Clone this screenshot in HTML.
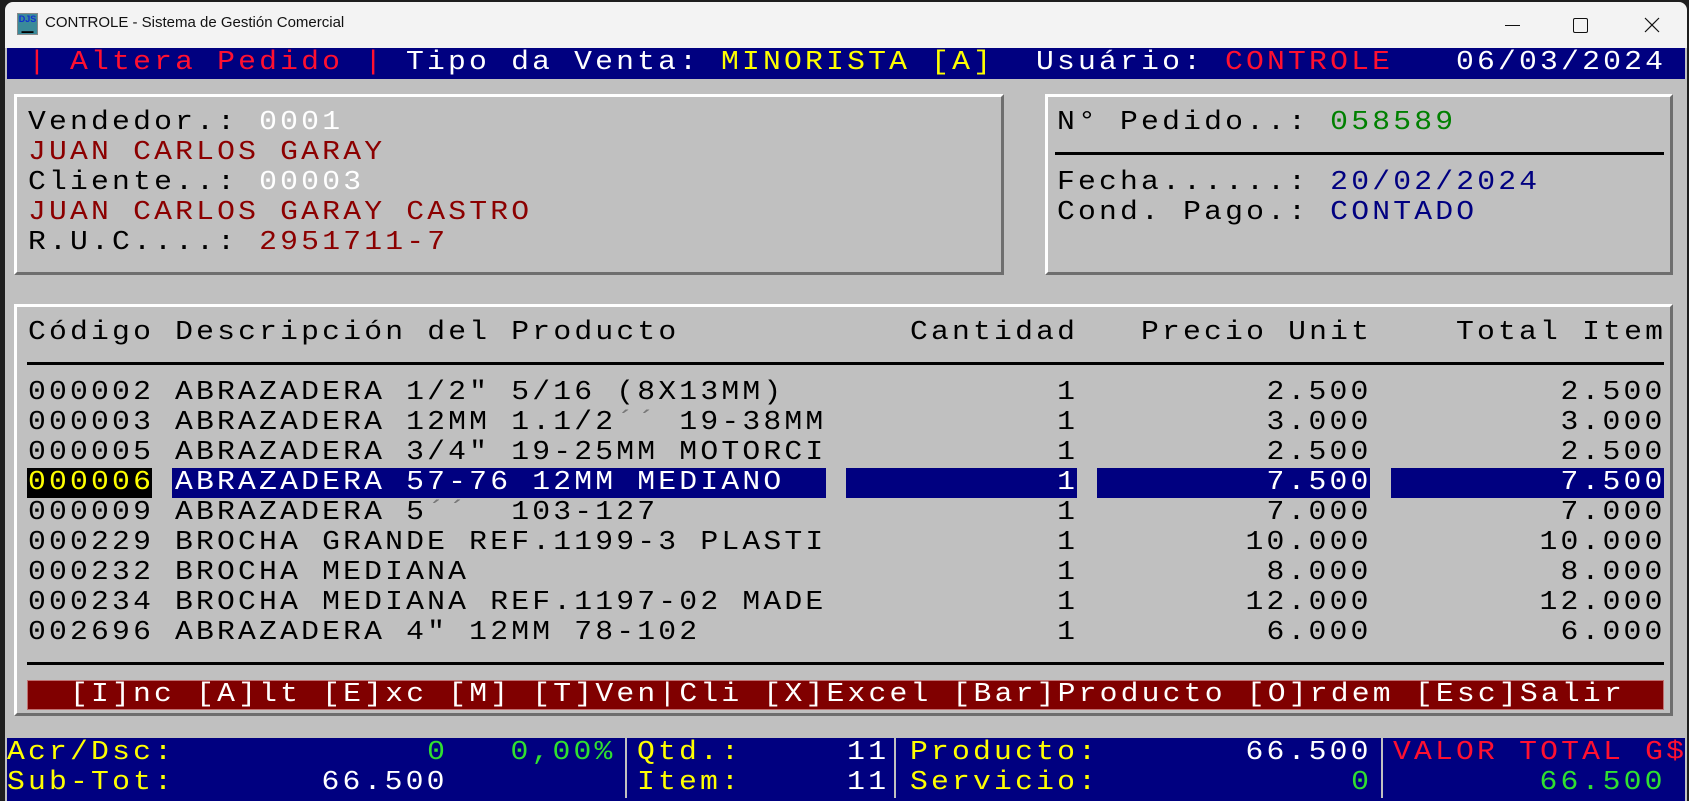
<!DOCTYPE html>
<html><head><meta charset="utf-8"><style>
body{margin:0;width:1689px;height:801px;background:#1e1e1e;overflow:hidden;position:relative;font-family:"Liberation Sans",sans-serif}
#tb{position:absolute;left:5px;top:2px;width:1682px;height:46px;background:#f3f3f3;border-radius:8px 8px 0 0}
#con{position:absolute;left:5px;top:48px;width:1682px;height:753px;background:#c0c0c0}
.l{position:absolute;height:30px;line-height:30px;font-family:"Liberation Mono",monospace;font-size:27px;letter-spacing:2.9px;white-space:pre;color:#000;transform:scaleX(1.1);transform-origin:left center}
.l[style*="right"]{transform-origin:right center}
.bar{position:absolute;height:30px}
.box{position:absolute;box-sizing:border-box;border:3px solid;border-color:#fff #6e6e6e #6e6e6e #fff}
.hl{position:absolute;height:3px;background:#000}
.w{color:#fff}.r{color:#ff1030}.y{color:#ffff00}.dr{color:#8b0000}.g{color:#008000}.nv{color:#000080}.lg{color:#30e030}.t{color:#777}
.vs{position:absolute;top:738px;width:2px;height:60px;background:#c0c0c0}
</style></head><body>
<div id="tb"></div>
<div style="position:absolute;left:17px;top:13px;width:21px;height:22px;background:#3a8a9a;border:1px solid #888;box-sizing:border-box;font:bold 9px 'Liberation Sans';color:#1030d0;text-align:center;line-height:11px">DJS<br><span style="font-size:6px;color:#000">▬▬</span></div>
<div style="position:absolute;left:45px;top:14px;font-size:15px;color:#111">CONTROLE - Sistema de Gestión Comercial</div>
<div style="position:absolute;left:1505px;top:25px;width:15px;height:1px;background:#111"></div>
<div style="position:absolute;left:1573px;top:18px;width:13px;height:13px;border:1px solid #111;border-radius:2px"></div>
<svg style="position:absolute;left:1644px;top:17px" width="16" height="16"><path d="M1 1L15 15M15 1L1 15" stroke="#111" stroke-width="1.2"/></svg>
<div id="con"></div>
<div class="bar" style="left:7px;top:48px;width:1678px;height:31px;background:#000080"></div>
<div class="l r" style="top:48px;left:28px">| Altera Pedido |</div>
<div class="l w" style="top:48px;left:406px">Tipo da Venta:</div>
<div class="l y" style="top:48px;left:721px">MINORISTA [A]</div>
<div class="l w" style="top:48px;left:1036px">Usuário:</div>
<div class="l r" style="top:48px;left:1225px">CONTROLE</div>
<div class="l w" style="top:48px;left:1456px">06/03/2024</div>

<div class="box" style="left:14px;top:94px;width:990px;height:181px"></div>
<div class="box" style="left:1045px;top:94px;width:628px;height:181px"></div>
<div class="box" style="left:14px;top:304px;width:1659px;height:412px"></div>

<div class="l" style="top:108px;left:28px">Vendedor.: <span class="w">0001</span></div>
<div class="l dr" style="top:138px;left:28px">JUAN CARLOS GARAY</div>
<div class="l" style="top:168px;left:28px">Cliente..: <span class="w">00003</span></div>
<div class="l dr" style="top:198px;left:28px">JUAN CARLOS GARAY CASTRO</div>
<div class="l" style="top:228px;left:28px">R.U.C....: <span class="dr">2951711-7</span></div>

<div class="l" style="top:108px;left:1057px">N° Pedido..: <span class="g">058589</span></div>
<div class="hl" style="left:1055px;top:152px;width:609px"></div>
<div class="l" style="top:168px;left:1057px">Fecha......: <span class="nv">20/02/2024</span></div>
<div class="l" style="top:198px;left:1057px">Cond. Pago.: <span class="nv">CONTADO</span></div>

<div class="l" style="top:318px;left:28px">Código Descripción del Producto</div>
<div class="l" style="top:318px;left:910px">Cantidad</div>
<div class="l" style="top:318px;left:1141px">Precio Unit</div>
<div class="l" style="top:318px;left:1456px">Total Item</div>
<div class="hl" style="left:27px;top:362px;width:1637px"></div>

<div class="bar" style="left:27px;top:468px;width:125px;background:#000"></div>
<div class="bar" style="left:172px;top:468px;width:654px;background:#000080"></div>
<div class="bar" style="left:846px;top:468px;width:231px;background:#000080"></div>
<div class="bar" style="left:1097px;top:468px;width:273px;background:#000080"></div>
<div class="bar" style="left:1391px;top:468px;width:273px;background:#000080"></div>

<div class="l" style="top:378px;left:28px">000002</div><div class="l" style="top:378px;left:175px">ABRAZADERA 1/2" 5/16 (8X13MM)</div>
<div class="l" style="top:408px;left:28px">000003</div><div class="l" style="top:408px;left:175px">ABRAZADERA 12MM 1.1/2<span class="t">´´</span> 19-38MM</div>
<div class="l" style="top:438px;left:28px">000005</div><div class="l" style="top:438px;left:175px">ABRAZADERA 3/4" 19-25MM MOTORCI</div>
<div class="l y" style="top:468px;left:28px">000006</div><div class="l w" style="top:468px;left:175px">ABRAZADERA 57-76 12MM MEDIANO</div>
<div class="l" style="top:498px;left:28px">000009</div><div class="l" style="top:498px;left:175px">ABRAZADERA 5<span class="t">´´</span>  103-127</div>
<div class="l" style="top:528px;left:28px">000229</div><div class="l" style="top:528px;left:175px">BROCHA GRANDE REF.1199-3 PLASTI</div>
<div class="l" style="top:558px;left:28px">000232</div><div class="l" style="top:558px;left:175px">BROCHA MEDIANA</div>
<div class="l" style="top:588px;left:28px">000234</div><div class="l" style="top:588px;left:175px">BROCHA MEDIANA REF.1197-02 MADE</div>
<div class="l" style="top:618px;left:28px">002696</div><div class="l" style="top:618px;left:175px">ABRAZADERA 4" 12MM 78-102</div>

<div class="l" style="top:378px;right:611px">1</div><div class="l" style="top:378px;right:317px">2.500</div><div class="l" style="top:378px;right:23px">2.500</div>
<div class="l" style="top:408px;right:611px">1</div><div class="l" style="top:408px;right:317px">3.000</div><div class="l" style="top:408px;right:23px">3.000</div>
<div class="l" style="top:438px;right:611px">1</div><div class="l" style="top:438px;right:317px">2.500</div><div class="l" style="top:438px;right:23px">2.500</div>
<div class="l w" style="top:468px;right:611px">1</div><div class="l w" style="top:468px;right:317px">7.500</div><div class="l w" style="top:468px;right:23px">7.500</div>
<div class="l" style="top:498px;right:611px">1</div><div class="l" style="top:498px;right:317px">7.000</div><div class="l" style="top:498px;right:23px">7.000</div>
<div class="l" style="top:528px;right:611px">1</div><div class="l" style="top:528px;right:317px">10.000</div><div class="l" style="top:528px;right:23px">10.000</div>
<div class="l" style="top:558px;right:611px">1</div><div class="l" style="top:558px;right:317px">8.000</div><div class="l" style="top:558px;right:23px">8.000</div>
<div class="l" style="top:588px;right:611px">1</div><div class="l" style="top:588px;right:317px">12.000</div><div class="l" style="top:588px;right:23px">12.000</div>
<div class="l" style="top:618px;right:611px">1</div><div class="l" style="top:618px;right:317px">6.000</div><div class="l" style="top:618px;right:23px">6.000</div>
<div class="hl" style="left:27px;top:662px;width:1637px"></div>

<div class="bar" style="left:27px;top:680px;width:1637px;background:#800000;border:1px solid #c07070;box-sizing:border-box"></div>
<div class="l w" style="top:680px;left:70px">[I]nc [A]lt [E]xc [M] [T]Ven|Cli [X]Excel [Bar]Producto [O]rdem [Esc]Salir</div>

<div class="bar" style="left:7px;top:738px;width:1678px;height:63px;background:#000080"></div>
<div class="vs" style="left:625px"></div>
<div class="vs" style="left:894px"></div>
<div class="vs" style="left:1381px"></div>
<div class="l y" style="top:738px;left:7px">Acr/Dsc:</div>
<div class="l lg" style="top:738px;right:1241px">0</div>
<div class="l lg" style="top:738px;right:1073px">0,00%</div>
<div class="l y" style="top:738px;left:637px">Qtd.:</div>
<div class="l w" style="top:738px;right:800px">11</div>
<div class="l y" style="top:738px;left:910px">Producto:</div>
<div class="l w" style="top:738px;right:317px">66.500</div>
<div class="l r" style="top:738px;left:1393px">VALOR TOTAL G$</div>
<div class="l y" style="top:768px;left:7px">Sub-Tot:</div>
<div class="l w" style="top:768px;right:1241px">66.500</div>
<div class="l y" style="top:768px;left:637px">Item:</div>
<div class="l w" style="top:768px;right:800px">11</div>
<div class="l y" style="top:768px;left:910px">Servicio:</div>
<div class="l lg" style="top:768px;right:317px">0</div>
<div class="l lg" style="top:768px;right:23px">66.500</div>
</body></html>
